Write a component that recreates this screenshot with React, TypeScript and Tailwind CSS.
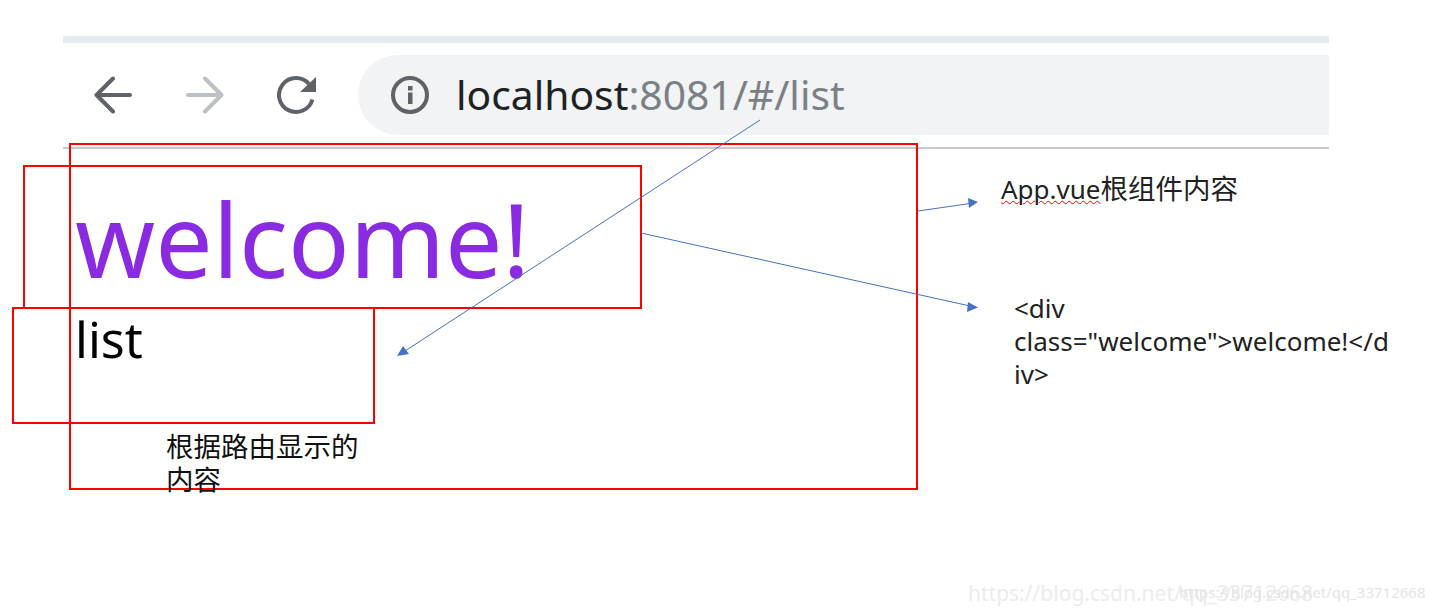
const sans = 'font-["Noto_Sans","Noto_Sans_CJK_SC",sans-serif]';

// red annotation box
function RedBox({ className }: { className: string }) {
  return <div className={`absolute border-2 border-[#f00] ${className}`}></div>;
}

function Arrows() {
  return (
    <svg className="absolute left-0 top-0" width="1435" height="610" viewBox="0 0 1435 610" fill="none">
      <g stroke="#4472c4" strokeWidth="1">
        <line x1="918" y1="211" x2="970" y2="203.5" />
        <line x1="641" y1="233" x2="970" y2="306" />
        <line x1="760" y1="120" x2="405" y2="351" />
      </g>
      <g fill="#4472c4">
        <polygon points="978,202 968,198 969,208" />
        <polygon points="978,307.5 968,302 967,312" />
        <polygon points="397,356 403,346 409,354" />
      </g>
    </svg>
  );
}

function Toolbar() {
  return (
    <div className="ml-[63px] w-[1266px] pt-9">
      <div className="h-[7px] bg-[#e8ebee]"></div>
      <div className="flex h-[106px] items-start border-b-2 border-[#c9c9c9] pt-3">
        <div className="flex h-20 w-[295px] items-center pl-[31px]">
          <svg width="38" height="38" viewBox="0 0 38 38" fill="none" stroke="#5f6368" strokeWidth="4" strokeLinecap="round" strokeLinejoin="round">
            <path d="M36 19H3M19 2.5L2.5 19L19 35.5" />
          </svg>
          <svg className="ml-[54px]" width="38" height="38" viewBox="0 0 38 38" fill="none" stroke="#bdc1c6" strokeWidth="4" strokeLinecap="round" strokeLinejoin="round">
            <path d="M2 19H35M19 2.5L35.5 19L19 35.5" />
          </svg>
          <svg className="ml-[53px]" width="40" height="40" viewBox="0 0 40 40" fill="none">
            <path d="M32 9A17 17 0 1 0 35.4 24.4" stroke="#5f6368" strokeWidth="4" />
            <path d="M39 2V17H23Z" fill="#5f6368" />
          </svg>
        </div>
        <div className="flex h-20 flex-1 items-center rounded-l-[40px] bg-[#f1f3f4] pl-[32px]">
          <svg width="40" height="40" viewBox="0 0 40 40" fill="none">
            <circle cx="20" cy="20" r="17" stroke="#5f6368" strokeWidth="4" />
            <rect x="18" y="17.5" width="4.5" height="11.5" fill="#5f6368" />
            <rect x="18" y="11" width="4.5" height="4.5" fill="#5f6368" />
          </svg>
          <span className={`ml-[26px] -translate-y-px text-[40.8px] leading-none ${sans}`}>
            <span className="text-[#202124]">localhost</span>
            <span className="text-[#7b8084]">:8081/#/list</span>
          </span>
        </div>
      </div>
    </div>
  );
}

export default function App() {
  return (
    <div className={`relative h-[610px] w-[1435px] overflow-hidden bg-white ${sans}`}>
      <Toolbar />

      <div className="absolute left-[75px] top-[171px] text-[102px] leading-[136px] text-[#8a2be2]">welcome!</div>
      <div className="absolute left-[75px] top-[306px] text-[50px] leading-[66px] text-black">list</div>

      <RedBox className="left-[69px] top-[143px] h-[347px] w-[849px]" />
      <RedBox className="left-[23px] top-[165px] h-[144px] w-[619px]" />
      <RedBox className="left-[12px] top-[307px] h-[117px] w-[363px]" />
      <Arrows />

      <div className="absolute left-[166px] top-[430px] w-[200px] text-[27.5px] leading-[33px] text-[#111]">根据路由显示的<br />内容</div>

      <div className="absolute left-[1001px] top-[173px] text-[27.5px] leading-8 text-[#222]">
        <span className="text-[26px] underline decoration-wavy decoration-[#f00] decoration-1">App.vue</span>根组件内容
      </div>
      <div className="absolute left-[1014px] top-[292px] w-[400px] text-[26px] leading-[33px] text-[#222]">
        &lt;div<br />class="welcome"&gt;welcome!&lt;/d<br />iv&gt;
      </div>

      <div className="absolute left-[968px] top-[575px] text-[21px] leading-9 text-[#ececec]">https://blog.csdn.net/qq_33712668</div>
      <div className="absolute left-[1179px] top-[582px] text-[15px] leading-5 text-[#e4e4e4]">https://blog.csdn.net/qq_33712668</div>
    </div>
  );
}
